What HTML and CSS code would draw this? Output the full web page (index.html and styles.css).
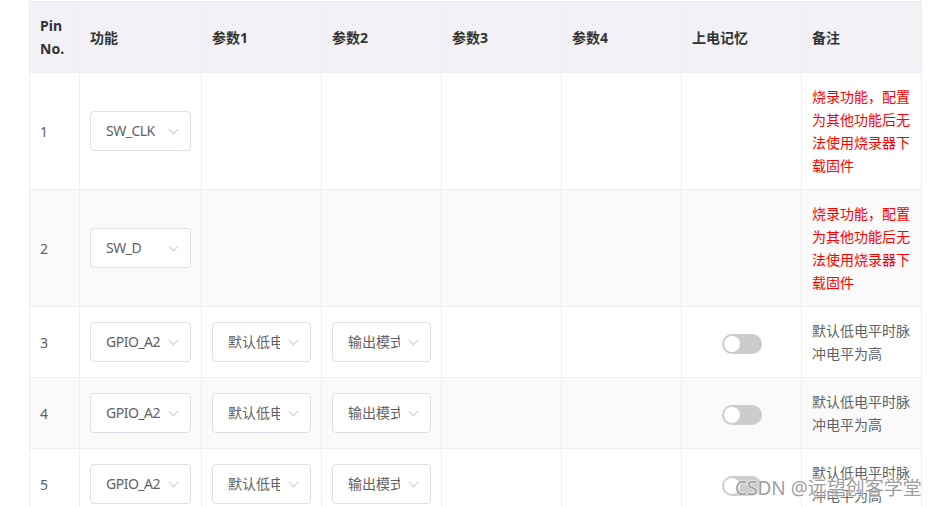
FILE: index.html
```html
<!DOCTYPE html>
<html lang="zh-CN">
<head>
<meta charset="utf-8">
<title>Pin 配置</title>
<link rel="stylesheet" href="styles.css">
</head>
<body>
<div class="page">
  <table class="pin-table">
    <colgroup>
      <col class="c-pin"><col class="c-func"><col class="c-std"><col class="c-std"><col class="c-std"><col class="c-std"><col class="c-std"><col class="c-std">
    </colgroup>
    <thead>
      <tr>
        <th>Pin No.</th>
        <th>功能</th>
        <th>参数1</th>
        <th>参数2</th>
        <th>参数3</th>
        <th>参数4</th>
        <th>上电记忆</th>
        <th>备注</th>
      </tr>
    </thead>
    <tbody>
      <tr>
        <td>1</td>
        <td><div class="select"><span class="select-text latin">SW_CLK</span><span class="arrow"></span></div></td>
        <td></td><td></td><td></td><td></td><td></td>
        <td class="note warn">烧录功能，配置为其他功能后无法使用烧录器下载固件</td>
      </tr>
      <tr class="stripe">
        <td>2</td>
        <td><div class="select"><span class="select-text latin">SW_D</span><span class="arrow"></span></div></td>
        <td></td><td></td><td></td><td></td><td></td>
        <td class="note warn">烧录功能，配置为其他功能后无法使用烧录器下载固件</td>
      </tr>
      <tr>
        <td>3</td>
        <td><div class="select"><span class="select-text latin">GPIO_A2</span><span class="arrow"></span></div></td>
        <td><div class="select"><span class="select-text">默认低电平</span><span class="arrow"></span></div></td>
        <td><div class="select"><span class="select-text">输出模式</span><span class="arrow"></span></div></td>
        <td></td><td></td>
        <td class="center"><span class="switch"><span class="knob"></span></span></td>
        <td class="note">默认低电平时脉冲电平为高</td>
      </tr>
      <tr class="stripe">
        <td>4</td>
        <td><div class="select"><span class="select-text latin">GPIO_A2</span><span class="arrow"></span></div></td>
        <td><div class="select"><span class="select-text">默认低电平</span><span class="arrow"></span></div></td>
        <td><div class="select"><span class="select-text">输出模式</span><span class="arrow"></span></div></td>
        <td></td><td></td>
        <td class="center"><span class="switch"><span class="knob"></span></span></td>
        <td class="note">默认低电平时脉冲电平为高</td>
      </tr>
      <tr>
        <td>5</td>
        <td><div class="select"><span class="select-text latin">GPIO_A2</span><span class="arrow"></span></div></td>
        <td><div class="select"><span class="select-text">默认低电平</span><span class="arrow"></span></div></td>
        <td><div class="select"><span class="select-text">输出模式</span><span class="arrow"></span></div></td>
        <td></td><td></td>
        <td class="center"><span class="switch"><span class="knob"></span></span></td>
        <td class="note">默认低电平时脉冲电平为高</td>
      </tr>
    </tbody>
  </table>
</div>
<div class="watermark">CSDN @远望创客学堂</div>
</body>
</html>
```
FILE: styles.css
```css
* { box-sizing: border-box; }
html, body { margin: 0; padding: 0; background: #fff; }
body {
  font-family: "Noto Sans", "Noto Sans CJK SC", sans-serif;
  font-size: 14px;
  color: #606266;
  overflow: hidden;
  height: 506px;
}
.page { padding: 1px 0 0 29px; }
.pin-table {
  border-collapse: separate;
  border-spacing: 0;
  table-layout: fixed;
  width: 893px;
  border-top: 1px solid #ebeef5;
  border-left: 1px solid #ebeef5;
}
.c-pin { width: 50px; }
.c-func { width: 122px; }
.c-std { width: 120px; }
.pin-table th,
.pin-table td {
  border-right: 1px solid #ebeef5;
  border-bottom: 1px solid #ebeef5;
  padding: 12px 10px;
  line-height: 23px;
  text-align: left;
  vertical-align: middle;
}
.pin-table th {
  background: #f2f2f6;
  color: #333;
  font-weight: bold;
}
.pin-table tr.stripe td { background: #fafafa; }
.pin-table td.center { text-align: center; }
.note { word-break: break-all; }
.warn { color: #ff0000; }
.select {
  position: relative;
  height: 40px;
  border: 1px solid #dcdfe6;
  border-radius: 4px;
  background: #fff;
  padding: 0 30px 0 15px;
  display: flex;
  align-items: center;
}
.select-text {
  display: block;
  overflow: hidden;
  white-space: nowrap;
  line-height: 38px;
  color: #606266;
}
.select-text.latin { letter-spacing: -0.5px; }
.arrow {
  position: absolute;
  right: 13px;
  top: 14px;
  width: 7px;
  height: 7px;
  border-right: 1px solid #c8ccd4;
  border-bottom: 1px solid #c8ccd4;
  transform: rotate(45deg);
}
.switch {
  display: inline-block;
  position: relative;
  width: 40px;
  height: 20px;
  border-radius: 10px;
  background: #cccccc;
  vertical-align: middle;
}
.knob {
  position: absolute;
  left: 2px;
  top: 2px;
  width: 16px;
  height: 16px;
  border-radius: 50%;
  background: #fff;
}
.watermark {
  position: absolute;
  left: 735px;
  top: 473px;
  font-size: 19px;
  color: rgba(125, 125, 125, 0.75);
  text-shadow: 0 0 2px #fff, 0 0 2px #fff;
  white-space: nowrap;
  font-family: "Noto Sans", "Noto Sans CJK SC", sans-serif;
}
```
